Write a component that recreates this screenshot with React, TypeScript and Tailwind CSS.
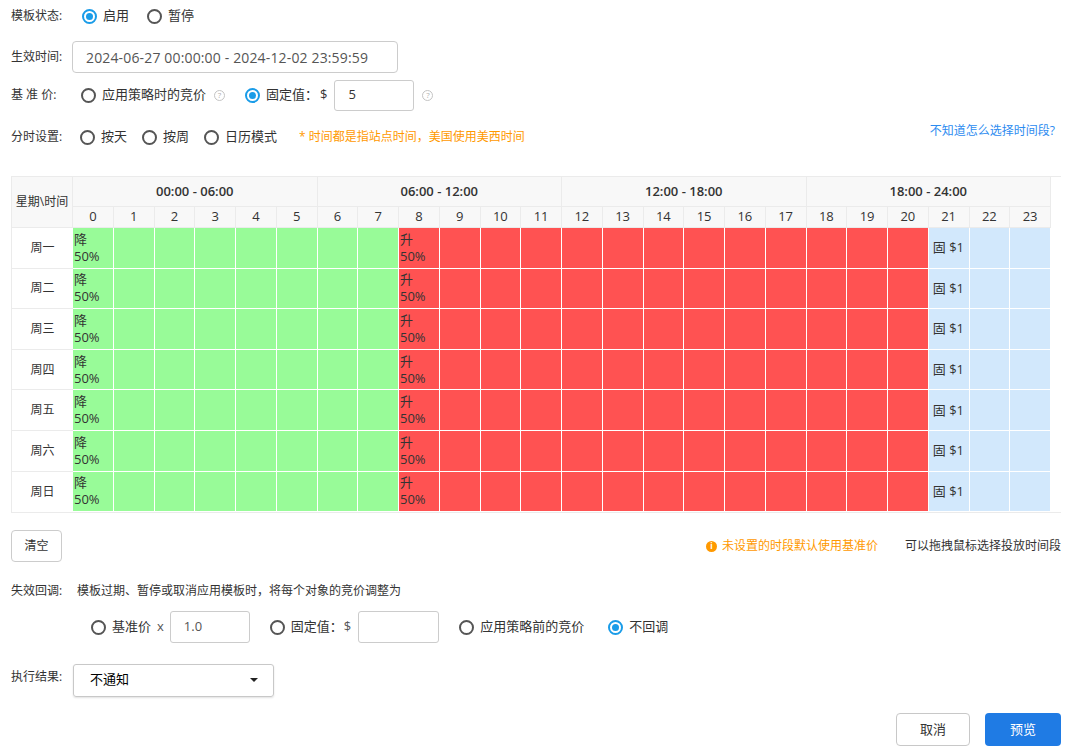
import React from "react";

const hours = Array.from({ length: 24 }, (_, i) => i);
const days = ["周一", "周二", "周三", "周四", "周五", "周六", "周日"];
const groups = ["00:00 - 06:00", "06:00 - 12:00", "12:00 - 18:00", "18:00 - 24:00"];

function cellColor(h: number) {
    if (h < 8) return "bg-[#98fb98]";
    if (h < 21) return "bg-[#ff5252]";
    return "bg-[#d2e8fc]";
}

function cellText(h: number) {
    if (h === 0) return "降 50%";
    if (h === 8) return "升 50%";
    if (h === 21) return "固 $1";
    return "";
}

function Radio({ checked, label, className = "" }: { checked?: boolean; label: string; className?: string }) {
    return (
        <label className={`flex items-center gap-[6px] ${className}`}>
            {checked ? (
                <span className="flex h-[15px] w-[15px] items-center justify-center rounded-full border-2 border-[#1a9ce8]">
                    <span className="h-[7px] w-[7px] rounded-full bg-[#1a9ce8]" />
                </span>
            ) : (
                <span className="h-[15px] w-[15px] rounded-full border-2 border-[#555]" />
            )}
            <span className="text-[13px] text-[#333]">{label}</span>
        </label>
    );
}

function Help({ className = "" }: { className?: string }) {
    return (
        <span
            className={`flex h-[11px] w-[11px] items-center justify-center rounded-full border border-[#c4c4c4] text-[8px] leading-none text-[#b0b0b0] ${className}`}
        >
            ?
        </span>
    );
}

export default function App() {
    return (
        <div
            className="relative w-[1081px] bg-white pl-[11px] text-[#333]"
            style={{ fontFamily: '"Open Sans", "Noto Sans CJK SC", sans-serif' }}
        >
            {/* 模板状态 */}
            <div className="flex h-[32px] items-center">
                <span className="w-[61px] text-[12px]">模板状态:</span>
                <Radio checked label="启用" className="ml-[10px]" />
                <Radio label="暂停" className="ml-[18px]" />
            </div>

            {/* 生效时间 */}
            <div className="mt-[9px] flex h-[32px] items-center">
                <span className="w-[61px] text-[12px]">生效时间:</span>
                <div className="flex h-[32px] w-[326px] items-center rounded-[4px] border border-[#ccc] pl-[13px] text-[14px] tracking-[0.15px] text-[#555]">
                    2024-06-27 00:00:00 - 2024-12-02 23:59:59
                </div>
            </div>

            {/* 基准价 */}
            <div className="mt-[6px] flex h-[32px] items-center">
                <span className="w-[61px] text-[12px] whitespace-pre">基 准 价:</span>
                <Radio label="应用策略时的竞价" className="ml-[9px]" />
                <Help className="ml-[8px]" />
                <Radio checked label="固定值：" className="ml-[20px]" />
                <span className="ml-[2px] text-[13px]">$</span>
                <div className="ml-[7px] flex h-[31px] w-[80px] items-center rounded-[3px] border border-[#ccc] pl-[13px] text-[13px]">
                    5
                </div>
                <Help className="ml-[8px]" />
            </div>

            {/* 分时设置 */}
            <div className="mt-[10px] flex h-[32px] items-center pr-[26px]">
                <span className="w-[61px] text-[12px]">分时设置:</span>
                <Radio label="按天" className="ml-[8px]" />
                <Radio label="按周" className="ml-[15px]" />
                <Radio label="日历模式" className="ml-[15px]" />
                <span className="ml-[22px] text-[12px] text-[#ff9900]">* 时间都是指站点时间，美国使用美西时间</span>
                <span className="mb-[12px] ml-auto text-[12px] text-[#2d8cf0]">不知道怎么选择时间段?</span>
            </div>

            {/* 时间表 */}
            <div className="mt-[23px] w-[1050px] border-t border-b border-[#ebebeb]">
                <div className="grid w-[1040px] grid-cols-[61px_repeat(24,minmax(0,1fr))] grid-rows-[30px_21px_repeat(7,40.6px)] border-l border-[#ebebeb]">
                    <div className="row-span-2 flex items-center justify-center border-r border-b border-[#ebebeb] bg-[#f8f8f8] text-[12px]">
                        星期\时间
                    </div>
                    {groups.map((g) => (
                        <div
                            key={g}
                            className="col-span-6 flex items-center justify-center border-r border-b border-[#ebebeb] bg-[#f8f8f8] text-[13px] font-semibold text-[#333]"
                        >
                            {g}
                        </div>
                    ))}
                    {hours.map((h) => (
                        <div
                            key={h}
                            className="flex items-center justify-center border-r border-b border-[#ebebeb] bg-[#f8f8f8] text-[13px]"
                        >
                            {h}
                        </div>
                    ))}
                    {days.map((d, di) => (
                        <React.Fragment key={d}>
                            <div
                                className={`flex items-center justify-center text-[12px] ${di < days.length - 1 ? "border-b border-[#ebebeb]" : ""}`}
                            >
                                {d}
                            </div>
                            {hours.map((h) => (
                                <div
                                    key={h}
                                    className={`flex items-center overflow-hidden border-r border-b border-white text-[13px] leading-[17px] text-[#333] ${h === 21 ? "pl-[4px]" : "pl-[1px]"} ${cellColor(h)}`}
                                >
                                    {cellText(h)}
                                </div>
                            ))}
                        </React.Fragment>
                    ))}
                </div>
            </div>

            {/* 清空 / 提示 */}
            <div className="mt-[17px] flex items-center pr-[20px]">
                <button className="h-[32px] w-[51px] rounded-[4px] border border-[#ccc] bg-white text-[12px] text-[#333]">
                    清空
                </button>
                <span className="ml-auto flex items-center gap-[5px] text-[12px] text-[#ff9900]">
                    <span className="flex h-[11px] w-[11px] items-center justify-center rounded-full bg-[#ff9900] text-[8px] font-bold leading-none text-white">
                        i
                    </span>
                    未设置的时段默认使用基准价
                </span>
                <span className="ml-[27px] text-[12px] text-[#333]">可以拖拽鼠标选择投放时间段</span>
            </div>

            {/* 失效回调 */}
            <div className="mt-[21px] flex h-[16px] items-center">
                <span className="w-[66px] text-[12px]">失效回调:</span>
                <span className="text-[12px]">模板过期、暂停或取消应用模板时，将每个对象的竞价调整为</span>
            </div>
            <div className="mt-[12px] flex h-[32px] items-center pl-[80px]">
                <Radio label="基准价" />
                <span className="ml-[6px] text-[13px] text-[#555]">x</span>
                <div className="ml-[6px] flex h-[32px] w-[80px] items-center rounded-[3px] border border-[#ccc] pl-[13px] text-[13px] text-[#555]">
                    1.0
                </div>
                <Radio label="固定值：" className="ml-[20px]" />
                <span className="ml-[1px] text-[13px] text-[#555]">$</span>
                <div className="ml-[7px] h-[32px] w-[81px] rounded-[3px] border border-[#ccc]" />
                <Radio label="应用策略前的竞价" className="ml-[20px]" />
                <Radio checked label="不回调" className="ml-[24px]" />
            </div>

            {/* 执行结果 */}
            <div className="mt-[21px] flex h-[32px] items-center">
                <span className="mb-[6px] w-[62px] text-[12px]">执行结果:</span>
                <div className="flex h-[33px] w-[201px] items-center justify-between rounded-[3px] border border-[#c8c8c8] pr-[15px] pl-[16px] text-[13px] text-black shadow-[0_1px_2px_rgba(0,0,0,0.12)]">
                    不通知
                    <span className="h-0 w-0 border-t-[4px] border-r-[4px] border-l-[4px] border-t-[#222] border-r-transparent border-l-transparent" />
                </div>
            </div>

            {/* 操作 */}
            <div className="mt-[17px] flex justify-end gap-[15px] pr-[20px] pb-[10px]">
                <button className="h-[33px] w-[74px] rounded-[4px] border border-[#c8c8c8] bg-white text-[13px] text-[#333]">
                    取消
                </button>
                <button className="h-[33px] w-[76px] rounded-[4px] bg-[#1f7be4] text-[13px] text-white">预览</button>
            </div>
        </div>
    );
}
